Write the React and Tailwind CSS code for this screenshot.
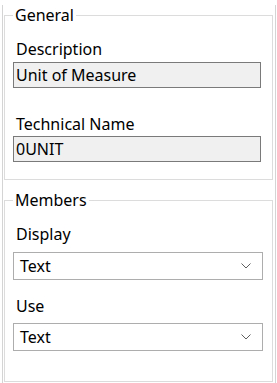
function Chevron() {
  return (
    <svg width="10" height="6" viewBox="0 0 10 6" className="shrink-0">
      <path d="M0.5 0.5 L5 5 L9.5 0.5" fill="none" stroke="#5f5f5f" strokeWidth="1" />
    </svg>
  );
}

function Label({ children, className }) {
  return <div className={`ml-[11px] leading-[20px] ${className}`}>{children}</div>;
}

function ReadOnly({ value, className }) {
  return (
    <div
      className={`ml-[8px] flex h-[26px] w-[248px] items-center border border-[#7a7a7a] bg-[#f0f0f0] pl-[2px] leading-[20px] ${className}`}
    >
      {value}
    </div>
  );
}

function Select({ value, className }) {
  return (
    <div
      className={`ml-[8px] flex h-[28px] w-[250px] items-center justify-between border border-[#adadad] bg-white pl-[6px] pr-[11px] leading-[20px] ${className}`}
    >
      <span>{value}</span>
      <Chevron />
    </div>
  );
}

export default function App() {
  return (
    <div
      className="h-[383px] w-[277px] bg-white text-[16px] text-black"
      style={{ fontFamily: '"Noto Sans", sans-serif' }}
    >
      <div className="ml-[2px] h-full w-[274px] border-x border-[#d4d4d4]">
        <fieldset className="ml-[1px] mt-[5px] w-[269px] border border-[#dcdcdc] pb-[17px]">
          <legend className="ml-[8px] px-[2px] leading-[20px]">General</legend>
          <Label className="mt-[14px]">Description</Label>
          <ReadOnly value="Unit of Measure" className="mt-[3px]" />
          <Label className="mt-[26px]">Technical Name</Label>
          <ReadOnly value="0UNIT" className="mt-[2px]" />
        </fieldset>
        <fieldset className="ml-[1px] mt-[10px] w-[269px] border border-[#dcdcdc] pb-[30px]">
          <legend className="ml-[8px] px-[2px] leading-[20px]">Members</legend>
          <Label className="mt-[14px]">Display</Label>
          <Select value="Text" className="mt-[8px]" />
          <Label className="mt-[16px]">Use</Label>
          <Select value="Text" className="mt-[7px]" />
        </fieldset>
      </div>
    </div>
  );
}
